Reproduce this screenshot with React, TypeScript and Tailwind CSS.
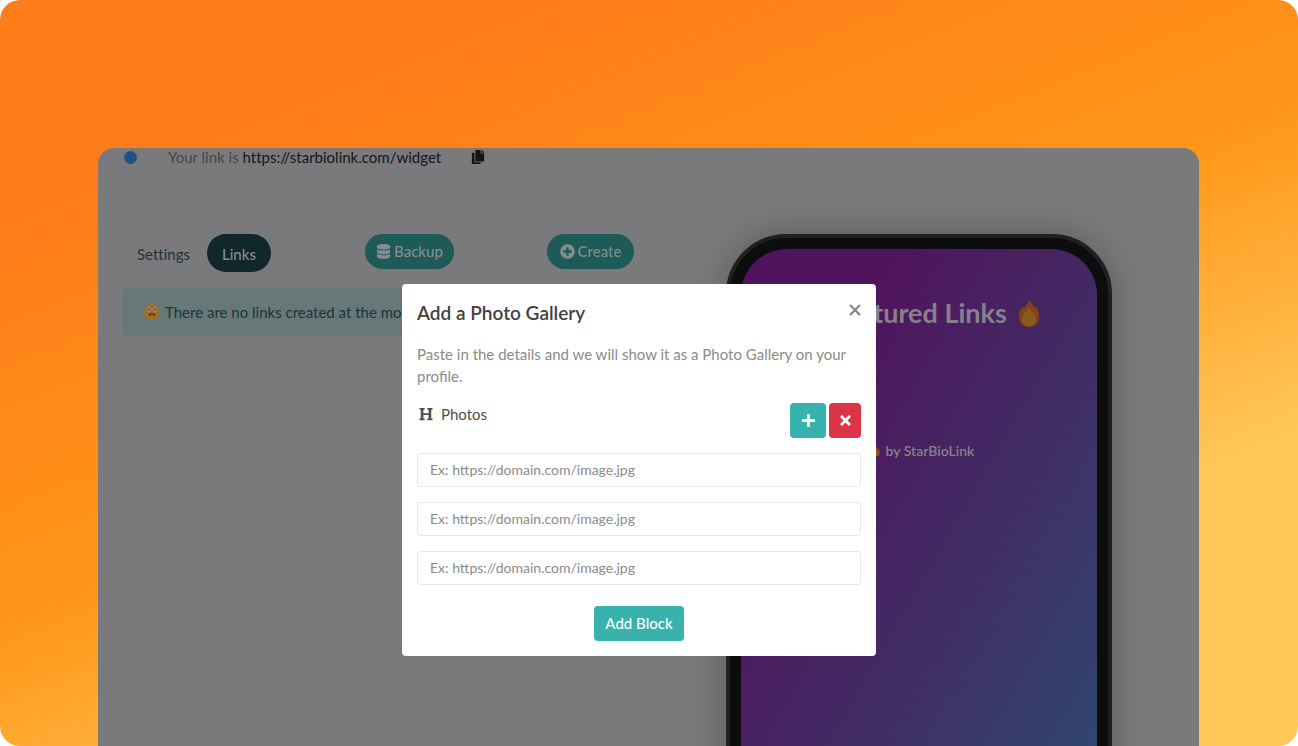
"use client";

import React, { useState } from "react";
import {
  FaCopy,
  FaDatabase,
  FaHeading,
  FaPlus,
  FaPlusCircle,
  FaTimes,
} from "react-icons/fa";

const Flame = ({ className }: { className: string }) => (
  <svg viewBox="0 0 20 28" className={className} aria-hidden="true">
    <path
      d="M10 0c1 3 3 4.500 4.500 7 .6 1 .9 1.600 1.300 2.200.5-.5.8-1.200.9-1.900C19 10.500 20 14 20 17.500 20 24 16 28 10 28S0 24 0 17.500C0 14 1.500 10 4 7c.1 1.200.5 2 1 2.600C6.500 7.500 9.600 4 10 0z"
      fill="#88401a"
    />
    <path
      d="M10 9c1.500 3.500 7 6 7 11.500 0 4-3 6.500-7 6.500s-7-2.500-7-6.500C3 15 8.500 12.500 10 9z"
      fill="#8a5c1c"
    />
  </svg>
);

const WorriedFace = () => (
  <svg viewBox="0 0 16 16" className="h-4 w-4" aria-hidden="true">
    <circle cx="8" cy="8" r="7.800" fill="#a56d1c" />
    <circle cx="4.800" cy="5.600" r="2.300" fill="#8f8f8a" />
    <circle cx="11.200" cy="5.600" r="2.300" fill="#8f8f8a" />
    <circle cx="5" cy="5.600" r=".8" fill="#2f2410" />
    <circle cx="11" cy="5.600" r=".8" fill="#2f2410" />
    <path
      d="M5.500 11.300c.6-1.400 1.600-1.800 2.700-1.600 1.100.1 2 .4 2.500 1.400"
      fill="none"
      stroke="#3a2a10"
      strokeWidth="1.300"
      strokeLinecap="round"
    />
  </svg>
);

const CloseIcon = () => (
  <svg viewBox="0 0 12 12" className="h-3 w-3" aria-hidden="true">
    <path d="M1 1l10 10M11 1L1 11" stroke="currentColor" strokeWidth="2.200" />
  </svg>
);

export default function App() {
  const [open, setOpen] = useState(true);
  const [photos, setPhotos] = useState(["", "", ""]);

  const updatePhoto = (index: number, value: string) => {
    setPhotos(photos.map((photo, i) => (i === index ? value : photo)));
  };

  return (
    <main className="flex h-screen flex-col overflow-hidden rounded-[20px] bg-[linear-gradient(158deg,#ff7c1a_18%,#ff9618_49%,#ffc658_75%)] px-[98px] pt-[148px] font-['Lato',sans-serif] text-[15px]">
      <div className="relative mr-px flex-1 overflow-hidden rounded-t-2xl bg-[#7a7a7c]">
        {/* Profile link */}
        <div className="flex h-[18px] items-center pl-[26px] text-[#464648] [font-variant-ligatures:none]">
          <span className="mr-[31px] h-[13px] w-[13px] rounded-full bg-[#1f5288]" />
          <p>
            Your link is{" "}
            <a href="#widget" className="text-[#151517]">
              https://starbiolink.com/widget
            </a>
          </p>
          <button className="ml-[30px] text-[#151517]" aria-label="Copy link">
            <FaCopy size={14} />
          </button>
        </div>

        <div className="flex items-start pl-6 pr-[87px] pt-[68px]">
          <section className="flex-1">
            <nav className="flex h-[38px] items-start [font-variant-ligatures:none]">
              <a href="#settings" className="mt-[9px] pl-[15px] text-[#1f3436]">
                Settings
              </a>
              <a
                href="#links"
                className="ml-[17px] flex h-[38px] w-16 items-center justify-center rounded-full bg-[#12272b] pt-0.5 font-medium text-[#858d8f]"
              >
                Links
              </a>
              <button className="ml-[94px] flex h-[35px] w-[89px] items-center justify-center gap-[3px] rounded-full bg-[#1d5a58] font-medium text-[#858d8f]">
                <FaDatabase size={15} />
                Backup
              </button>
              <button className="ml-[93px] flex h-[35px] w-[87px] items-center justify-center gap-[3px] rounded-full bg-[#1d5a58] font-medium text-[#858d8f]">
                <FaPlusCircle size={15} />
                Create
              </button>
            </nav>
            <div className="mr-20 mt-4 flex h-12 items-center gap-[5px] rounded bg-[#687879] pl-[22px] text-[#183539]">
              <WorriedFace />
              There are no links created at the moment
            </div>
          </section>

          {/* Phone preview */}
          <aside className="h-[780px] w-[386px] shrink-0 rounded-[60px] border-4 border-[#202021] bg-[#0d0d0d] p-[11px] shadow-[0_0_36px_rgba(0,0,0,0.25)]">
            <div className="h-full rounded-[46px] bg-[linear-gradient(120deg,#50145e_20%,#3d3465_60%,#2a4d70_90%)] pt-[46px] text-center font-bold text-[#85808b]">
              <h1 className="flex items-center justify-center gap-3 text-[27px] leading-9">
                <Flame className="h-7 w-5" />
                Featured Links
                <Flame className="h-7 w-5" />
              </h1>
              <p className="mt-[110px] flex items-center justify-center gap-1.5 pl-2 text-sm font-semibold">
                <Flame className="h-3 w-2" />
                by StarBioLink
              </p>
            </div>
          </aside>
        </div>

        {/* Photo gallery dialog */}
        {open && (
          <div
            role="dialog"
            aria-labelledby="dialog-title"
            className="absolute left-[304px] top-[136px] w-[474px] rounded bg-white px-[15px] pb-[15px] pt-[15px]"
          >
            <div className="flex items-start justify-between">
              <h2
                id="dialog-title"
                className="text-[19px] font-semibold leading-7 text-[#414141]"
              >
                Add a Photo Gallery
              </h2>
              <button
                onClick={() => setOpen(false)}
                className="mt-[5px] text-[#858585]"
                aria-label="Close"
              >
                <CloseIcon />
              </button>
            </div>
            <p className="mt-4 leading-[22px] text-[#8b8b8b]">
              Paste in the details and we will show it as a Photo Gallery on
              your profile.
            </p>
            <div className="mt-4 flex items-start justify-between">
              <p className="flex items-center gap-2 pl-0.5 leading-[22px] text-[#4f4f4f]">
                <FaHeading size={14} />
                Photos
              </p>
              <div className="flex gap-[3px] text-white">
                <button
                  onClick={() => setPhotos([...photos, ""])}
                  className="flex h-[35px] w-9 items-center justify-center rounded bg-[#38b2ac]"
                  aria-label="Add photo"
                >
                  <FaPlus size={15} />
                </button>
                <button
                  onClick={() => setPhotos(photos.slice(0, -1))}
                  className="flex h-[35px] w-8 items-center justify-center rounded bg-[#dc3545]"
                  aria-label="Remove photo"
                >
                  <FaTimes size={15} />
                </button>
              </div>
            </div>
            <div className="mt-[15px] flex flex-col gap-[15px]">
              {photos.map((photo, index) => (
                <input
                  key={index}
                  value={photo}
                  onChange={(e) => updatePhoto(index, e.target.value)}
                  aria-label={`Photo ${index + 1}`}
                  placeholder="Ex: https://domain.com/image.jpg"
                  className="h-[34px] w-full rounded-[3px] border border-[#e8e8e8] px-3 pb-0.5 text-sm text-[#4f4f4f] placeholder:text-[#8b8b8b]"
                />
              ))}
            </div>
            <button className="mx-auto mt-[21px] flex h-[35px] w-[90px] items-center justify-center rounded bg-[#38b2ac] font-medium text-white">
              Add Block
            </button>
          </div>
        )}
      </div>
    </main>
  );
}
